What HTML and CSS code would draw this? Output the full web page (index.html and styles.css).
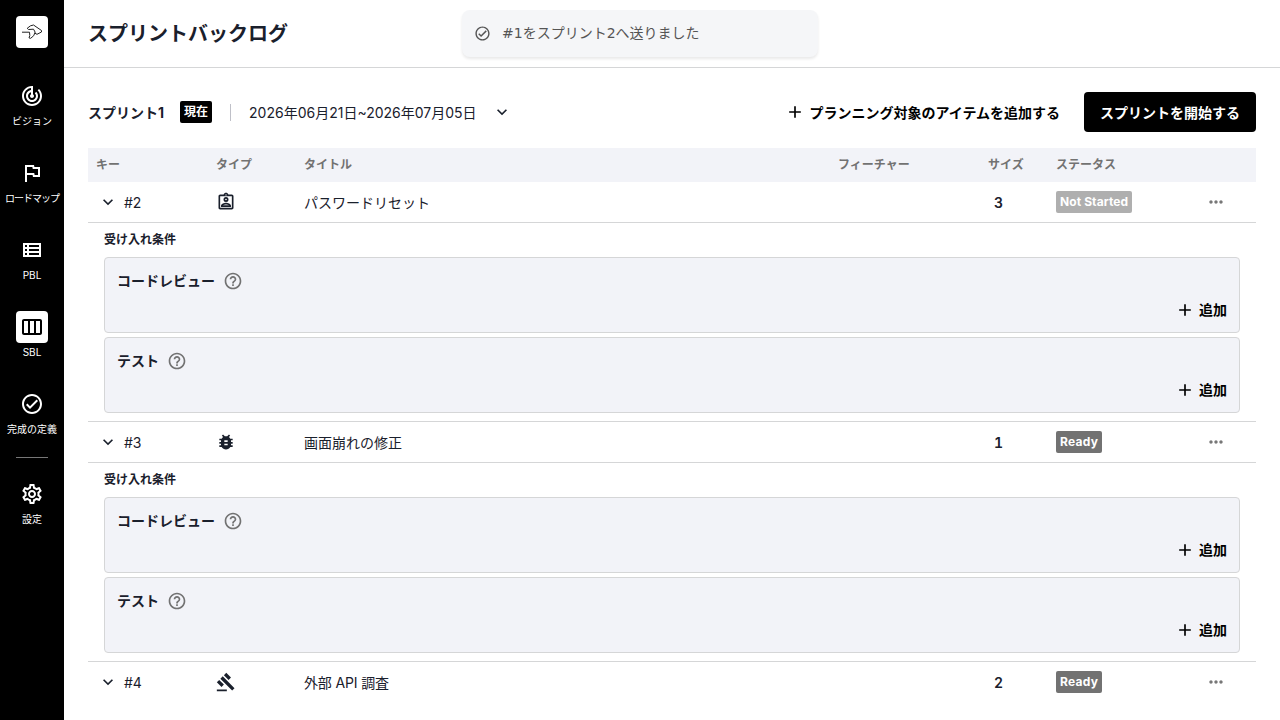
FILE: index.html
```html
<!DOCTYPE html>
<html lang="ja">
<head>
<meta charset="utf-8">
<title>スプリントバックログ</title>
<link rel="stylesheet" href="styles.css">
</head>
<body>
<svg class="defs" aria-hidden="true">
  <symbol id="vision" viewBox="0 0 24 24"><path d="m19.07 4.93-1.41 1.41C19.1 7.79 20 9.79 20 12c0 4.42-3.58 8-8 8s-8-3.58-8-8c0-4.08 3.05-7.44 7-7.93v2.02C8.16 6.57 6 9.03 6 12c0 3.31 2.69 6 6 6s6-2.69 6-6c0-1.66-.67-3.16-1.76-4.24l-1.41 1.41C15.55 9.9 16 10.9 16 12c0 2.21-1.79 4-4 4s-4-1.79-4-4c0-1.86 1.28-3.41 3-3.86v2.14c-.6.35-1 .98-1 1.72 0 1.1.9 2 2 2s2-.9 2-2c0-.74-.4-1.38-1-1.72V2h-1C6.48 2 2 6.48 2 12s4.48 10 10 10 10-4.48 10-10c0-2.76-1.12-5.26-2.93-7.07z"/></symbol>
  <symbol id="flag" viewBox="0 0 24 24"><path d="m12.36 6 .4 2H18v6h-3.36l-.4-2H7V6h5.36M14 4H5v17h2v-7h5.6l.4 2h7V6h-5.6L14 4z"/></symbol>
  <symbol id="list" viewBox="0 0 24 24"><path d="M3 5v14h18V5H3zm4 2v2H5V7h2zm-2 6v-2h2v2H5zm0 2h2v2H5v-2zm14 2H9v-2h10v2zm0-4H9v-2h10v2zm0-4H9V7h10v2z"/></symbol>
  <symbol id="board" viewBox="0 0 24 24"><path d="M20 4H4c-1.1 0-2 .9-2 2v12c0 1.1.9 2 2 2h16c1.1 0 2-.9 2-2V6c0-1.1-.9-2-2-2zM8 18H4V6h4v12zm6 0h-4V6h4v12zm6 0h-4V6h4v12z"/></symbol>
  <symbol id="check" viewBox="0 0 24 24"><path d="M12 2C6.48 2 2 6.48 2 12s4.48 10 10 10 10-4.48 10-10S17.52 2 12 2zm0 18c-4.41 0-8-3.59-8-8s3.59-8 8-8 8 3.59 8 8-3.59 8-8 8zm4.59-12.42L10 14.17l-2.59-2.58L6 13l4 4 8-8z"/></symbol>
  <symbol id="gear" viewBox="0 0 24 24"><path d="M19.43 12.98c.04-.32.07-.64.07-.98 0-.34-.03-.66-.07-.98l2.11-1.65c.19-.15.24-.42.12-.64l-2-3.46c-.09-.16-.26-.25-.44-.25-.06 0-.12.01-.17.03l-2.49 1c-.52-.4-1.08-.73-1.69-.98l-.38-2.65C14.46 2.18 14.25 2 14 2h-4c-.25 0-.46.18-.49.42l-.38 2.65c-.61.25-1.17.59-1.69.98l-2.49-1c-.06-.02-.12-.03-.18-.03-.17 0-.34.09-.43.25l-2 3.46c-.13.22-.07.49.12.64l2.11 1.65c-.04.32-.07.65-.07.98 0 .33.03.66.07.98l-2.11 1.65c-.19.15-.24.42-.12.64l2 3.46c.09.16.26.25.44.25.06 0 .12-.01.17-.03l2.49-1c.52.4 1.08.73 1.69.98l.38 2.65c.03.24.24.42.49.42h4c.25 0 .46-.18.49-.42l.38-2.65c.61-.25 1.17-.59 1.69-.98l2.49 1c.06.02.12.03.18.03.17 0 .34-.09.43-.25l2-3.46c.12-.22.07-.49-.12-.64l-2.11-1.65zm-1.98-1.71c.04.31.05.52.05.73 0 .21-.02.43-.05.73l-.14 1.13.89.7 1.08.84-.7 1.21-1.27-.51-1.04-.42-.9.68c-.43.32-.84.56-1.25.73l-1.06.43-.16 1.13-.2 1.35h-1.4l-.19-1.35-.16-1.13-1.06-.43c-.43-.18-.83-.41-1.23-.71l-.91-.7-1.06.43-1.27.51-.7-1.21 1.08-.84.89-.7-.14-1.13c-.03-.31-.05-.54-.05-.74s.02-.43.05-.73l.14-1.13-.89-.7-1.08-.84.7-1.21 1.27.51 1.04.42.9-.68c.43-.32.84-.56 1.25-.73l1.06-.43.16-1.13.2-1.35h1.39l.19 1.35.16 1.13 1.06.43c.43.18.83.41 1.23.71l.91.7 1.06-.43 1.27-.51.7 1.21-1.07.85-.89.7.14 1.13zM12 8c-2.21 0-4 1.79-4 4s1.79 4 4 4 4-1.79 4-4-1.79-4-4-4zm0 6c-1.1 0-2-.9-2-2s.9-2 2-2 2 .9 2 2-.9 2-2 2z"/></symbol>
  <symbol id="chevron" viewBox="0 0 24 24"><path d="M16.59 8.59 12 13.17 7.41 8.59 6 10l6 6 6-6z"/></symbol>
  <symbol id="plus" viewBox="0 0 24 24"><path d="M19 13h-6v6h-2v-6H5v-2h6V5h2v6h6v2z"/></symbol>
  <symbol id="more" viewBox="0 0 24 24"><path d="M6 10c-1.1 0-2 .9-2 2s.9 2 2 2 2-.9 2-2-.9-2-2-2zm12 0c-1.1 0-2 .9-2 2s.9 2 2 2 2-.9 2-2-.9-2-2-2zm-6 0c-1.1 0-2 .9-2 2s.9 2 2 2 2-.9 2-2-.9-2-2-2z"/></symbol>
  <symbol id="help" viewBox="0 0 24 24"><path d="M11 18h2v-2h-2v2zm1-16C6.48 2 2 6.48 2 12s4.48 10 10 10 10-4.48 10-10S17.52 2 12 2zm0 18c-4.41 0-8-3.59-8-8s3.59-8 8-8 8 3.59 8 8-3.59 8-8 8zm0-14c-2.21 0-4 1.79-4 4h2c0-1.1.9-2 2-2s2 .9 2 2c0 2-3 1.75-3 5h2c0-2.25 3-2.5 3-5 0-2.21-1.79-4-4-4z"/></symbol>
  <symbol id="story" viewBox="0 0 24 24"><path fill-rule="evenodd" d="M5 3h4.18C9.6 1.84 10.7 1 12 1s2.4.84 2.82 2H19c1.1 0 2 .9 2 2v14c0 1.1-.9 2-2 2H5c-1.1 0-2-.9-2-2V5c0-1.1.9-2 2-2zm0 2v14h14V5H5zm7-2.25a.75.75 0 1 0 0 1.5.75.75 0 0 0 0-1.5zM12 6a3 3 0 1 1 0 6 3 3 0 0 1 0-6zm0 2a1 1 0 1 0 0 2 1 1 0 0 0 0-2zm-6 8.47c0-2.5 3.97-3.58 6-3.58s6 1.08 6 3.58V18H6v-1.530zM8.310 16h7.380c-.69-.56-2.380-1.120-3.690-1.120S8.990 15.440 8.310 16z"/></symbol>
  <symbol id="bug" viewBox="0 0 24 24"><path d="M20 8h-2.81c-.45-.78-1.07-1.45-1.82-1.96L17 4.41 15.59 3l-2.17 2.17C12.96 5.06 12.49 5 12 5c-.49 0-.96.06-1.41.17L8.41 3 7 4.41l1.62 1.63C7.88 6.55 7.26 7.22 6.81 8H4v2h2.09c-.05.33-.09.66-.09 1v1H4v2h2v1c0 .34.04.67.09 1H4v2h2.81c1.04 1.79 2.97 3 5.19 3s4.15-1.21 5.19-3H20v-2h-2.09c.05-.33.09-.66.09-1v-1h2v-2h-2v-1c0-.34-.04-.67-.09-1H20V8zm-6 8h-4v-2h4v2zm0-4h-4v-2h4v2z"/></symbol>
  <symbol id="gavel" viewBox="0 0 24 24"><path d="M1 21h12v2H1zM5.245 8.07l2.83-2.827 14.14 14.142-2.828 2.828zM12.317 1l5.657 5.656-2.83 2.83-5.654-5.66zM3.825 9.485l5.657 5.657-2.828 2.828-5.657-5.657z"/></symbol>
</svg>
<div class="app">
  <nav class="sidebar">
    <div class="logo"><svg viewBox="0 0 32 32"><path d="M6 16.200h7.500M11.200 12.300l3.300-2.500 3-.8 8 5.500v1.500l-4.500 2.300-2.500-1.300M11.200 12.300l1.300 1.200 5-.3 1.700 3-1.500 3.500-3 2.600-1.700-.4.800-2.400-.3-3.300"/></svg></div>
    <a class="nav-item"><span class="nav-icon"><svg class="i24"><use href="#vision"/></svg></span><span>ビジョン</span></a>
    <a class="nav-item"><span class="nav-icon"><svg class="i24"><use href="#flag"/></svg></span><span class="tight">ロードマップ</span></a>
    <a class="nav-item"><span class="nav-icon"><svg class="i24"><use href="#list"/></svg></span><span>PBL</span></a>
    <a class="nav-item active"><span class="nav-icon"><svg class="i24"><use href="#board"/></svg></span><span>SBL</span></a>
    <a class="nav-item"><span class="nav-icon"><svg class="i24"><use href="#check"/></svg></span><span>完成の定義</span></a>
    <div class="nav-divider"></div>
    <a class="nav-item"><span class="nav-icon"><svg class="i24"><use href="#gear"/></svg></span><span>設定</span></a>
  </nav>
  <main class="main">
    <header class="header"><h1>スプリントバックログ</h1></header>
    <section class="content">
      <div class="toolbar">
        <strong class="sprint">スプリント1</strong>
        <span class="badge current">現在</span>
        <span class="bar"></span>
        <span class="dates">2026年06月21日~2026年07月05日</span>
        <svg class="i20 toggle"><use href="#chevron"/></svg>
        <button class="text-btn add-items"><svg class="i20"><use href="#plus"/></svg><span>プランニング対象のアイテムを追加する</span></button>
        <button class="primary">スプリントを開始する</button>
      </div>
      <div class="grid thead"><span>キー</span><span>タイプ</span><span>タイトル</span><span>フィーチャー</span><span>サイズ</span><span>ステータス</span></div>

      <div class="grid row">
        <span class="key"><svg class="i20"><use href="#chevron"/></svg><span class="label">#2</span></span>
        <svg class="i20"><use href="#story"/></svg><span class="label">パスワードリセット</span><span></span><span class="size label">3</span>
        <span><span class="badge idle">Not Started</span></span><svg class="i20 more"><use href="#more"/></svg>
      </div>
      <div class="criteria">
        <h2>受け入れ条件</h2>
        <div class="card"><div class="card-title">コードレビュー<svg class="i20"><use href="#help"/></svg></div><button class="text-btn"><svg class="i20"><use href="#plus"/></svg>追加</button></div>
        <div class="card"><div class="card-title">テスト<svg class="i20"><use href="#help"/></svg></div><button class="text-btn"><svg class="i20"><use href="#plus"/></svg>追加</button></div>
      </div>

      <div class="grid row">
        <span class="key"><svg class="i20"><use href="#chevron"/></svg><span class="label">#3</span></span>
        <svg class="i20"><use href="#bug"/></svg><span class="label">画面崩れの修正</span><span></span><span class="size label">1</span>
        <span><span class="badge ready">Ready</span></span><svg class="i20 more"><use href="#more"/></svg>
      </div>
      <div class="criteria">
        <h2>受け入れ条件</h2>
        <div class="card"><div class="card-title">コードレビュー<svg class="i20"><use href="#help"/></svg></div><button class="text-btn"><svg class="i20"><use href="#plus"/></svg>追加</button></div>
        <div class="card"><div class="card-title">テスト<svg class="i20"><use href="#help"/></svg></div><button class="text-btn"><svg class="i20"><use href="#plus"/></svg>追加</button></div>
      </div>

      <div class="grid row">
        <span class="key"><svg class="i20"><use href="#chevron"/></svg><span class="label">#4</span></span>
        <svg class="i20"><use href="#gavel"/></svg><span class="label mixed">外部 API 調査</span><span></span><span class="size label">2</span>
        <span><span class="badge ready">Ready</span></span><svg class="i20 more"><use href="#more"/></svg>
      </div>
    </section>
  </main>
</div>
<div class="toast"><svg><use href="#check"/></svg><span>#1をスプリント2へ送りました</span></div>
</body>
</html>
```

FILE: styles.css
```css
* { box-sizing: border-box; }
body {
  margin: 0;
  font: 14px/20px Inter, "Noto Sans CJK JP", sans-serif;
  color: #1a202c;
  background: #fff;
}
h1, h2 { margin: 0; }
svg { display: block; flex: none; fill: currentColor; }
.defs { display: none; }
.i20 { width: 20px; height: 20px; }
.i24 { width: 24px; height: 24px; }
button { border: 0; padding: 0; background: none; font: inherit; font-weight: 700; color: #000; }

.app { display: flex; height: 720px; overflow: hidden; }
.sidebar {
  flex: none;
  width: 64px;
  padding-top: 16px;
  background: #000;
  color: #fff;
  display: flex;
  flex-direction: column;
  align-items: center;
}
.logo { width: 32px; height: 32px; margin-bottom: 32px; border-radius: 4px; background: #fff; }
.logo svg { width: 32px; height: 32px; fill: none; stroke: #222; stroke-width: 1; stroke-linejoin: round; }
.nav-item {
  display: flex;
  flex-direction: column;
  align-items: center;
  height: 77px;
  font-size: 10px;
  line-height: 18px;
  white-space: nowrap;
}
.nav-icon { width: 32px; height: 32px; padding: 4px; border-radius: 4px; }
.active .nav-icon { background: #fff; color: #000; }
.tight { letter-spacing: -1px; }
.nav-divider { width: 32px; height: 1px; margin: -8px 0 20px; background: #777; }

.main { flex: 1; min-width: 0; }
.header { height: 68px; padding: 19px 24px 0; border-bottom: 1px solid #d5d6d7; }
h1 { font-size: 20px; line-height: 30px; font-weight: 700; }
.content { padding: 24px 24px 0; }
.toolbar { display: flex; align-items: center; height: 40px; margin-bottom: 16px; }
.sprint, .dates, .add-items span, .label { padding-top: 2px; }
.sprint { font-weight: 700; }
.badge {
  display: block;
  width: max-content;
  height: 22px;
  padding: 0 4px;
  border-radius: 2px;
  font-size: 12px;
  line-height: 22px;
  font-weight: 700;
  letter-spacing: 0.1px;
  color: #fff;
}
.current { margin-left: 16px; background: #000; letter-spacing: 0; }
.idle { background: #afafaf; }
.ready { background: #727272; letter-spacing: 0.25px; }
.bar { width: 1px; height: 17px; margin: 0 18px; background: #bfc0c8; }
.toggle { margin-left: 15px; }
.text-btn { display: flex; align-items: center; gap: 4px; }
.add-items { margin-left: auto; }
.primary { height: 40px; margin-left: 24px; padding: 2px 16px 0; border-radius: 4px; background: #000; color: #fff; }

.grid {
  display: grid;
  grid-template-columns: 120px 88px 534px 150px 68px 144px 1fr;
  align-items: center;
  padding-left: 8px;
}
.thead { height: 34px; background: #f2f3f8; color: #727272; font-size: 12px; font-weight: 700; }
.row { height: 41px; border-bottom: 1px solid #d5d6d7; }
.row:last-child { border-bottom-color: transparent; }
.key { display: flex; align-items: center; gap: 6px; padding-left: 2px; }
.mixed { letter-spacing: -0.15px; }
.size { padding-left: 6px; font-weight: 600; font-variant-numeric: tabular-nums; }
.more { margin-left: 6px; color: #777; }

.criteria {
  display: flex;
  flex-direction: column;
  gap: 4px;
  height: 199px;
  padding: 7px 16px 0;
  border-bottom: 1px solid #d5d6d7;
}
h2 { font-size: 12px; line-height: 20px; margin-bottom: 3px; }
.card {
  height: 76px;
  padding: 13px 12px 0;
  border: 1px solid #d5d6d7;
  border-radius: 4px;
  background: #f2f3f8;
}
.card-title { display: flex; gap: 8px; font-weight: 700; }
.card-title svg { color: #727272; }
.card .text-btn { margin: 9px 0 0 auto; }

.toast {
  position: absolute;
  top: 10px;
  left: 462px;
  width: 356px;
  height: 47px;
  padding: 0 12px;
  display: flex;
  align-items: center;
  gap: 11px;
  border-radius: 8px;
  background: #f5f6f8;
  box-shadow: 0 2px 3px rgba(0, 0, 0, 0.09);
  color: #555;
  font-family: "DejaVu Sans", "Noto Sans CJK JP", sans-serif;
}
.toast svg { width: 17px; height: 17px; }
.toast span { padding-bottom: 1px; }
```
